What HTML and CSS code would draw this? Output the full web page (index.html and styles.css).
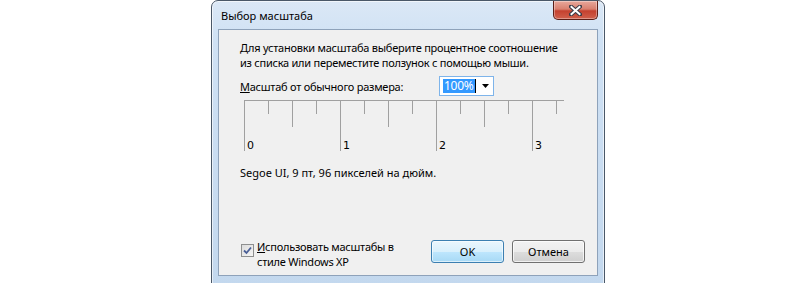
FILE: index.html
```html
<!DOCTYPE html>
<html lang="ru">
<head>
<meta charset="utf-8"/>
<title>Выбор масштаба</title>
<link rel="stylesheet" href="styles.css">
</head>
<body>
<div class="window">
  <div class="titlebar">
    <span class="title">Выбор масштаба</span>
    <div class="close">
      <svg width="13" height="11" viewBox="0 0 13 11">
        <path d="M2 1.5 L11 9.5 M11 1.5 L2 9.5" stroke="#3b3b47" stroke-width="4" stroke-linecap="square"/>
        <path d="M2.5 2 L10.5 9 M10.5 2 L2.5 9" stroke="#ffffff" stroke-width="2" stroke-linecap="square"/>
      </svg>
    </div>
  </div>
  <div class="client">
    <p class="intro">Для установки масштаба выберите процентное соотношение<br>из списка или переместите ползунок с помощью мыши.</p>
    <div class="scale-row">
      <label class="scale-label"><u>М</u>асштаб от обычного размера:</label>
      <div class="combo">
        <span class="combo-value">100%</span><span class="caret"></span>
        <svg class="combo-arrow" width="7" height="4" viewBox="0 0 7 4"><path d="M0 0 H7 L3.5 4 Z" fill="#000"/></svg>
      </div>
    </div>
    <svg class="ruler" width="322" height="51" viewBox="0 0 322 51">
      <g stroke="#a0a0a0" stroke-width="1">
        <line x1="0" y1="0.5" x2="320" y2="0.5"/>
        <line x1="0.5" y1="0" x2="0.5" y2="51"/>
        <line x1="96.5" y1="0" x2="96.5" y2="51"/>
        <line x1="192.5" y1="0" x2="192.5" y2="51"/>
        <line x1="288.5" y1="0" x2="288.5" y2="51"/>
        <line x1="48.5" y1="0" x2="48.5" y2="27"/>
        <line x1="144.5" y1="0" x2="144.5" y2="27"/>
        <line x1="240.5" y1="0" x2="240.5" y2="27"/>
        <line x1="24.5" y1="0" x2="24.5" y2="14"/>
        <line x1="72.5" y1="0" x2="72.5" y2="14"/>
        <line x1="120.5" y1="0" x2="120.5" y2="14"/>
        <line x1="168.5" y1="0" x2="168.5" y2="14"/>
        <line x1="216.5" y1="0" x2="216.5" y2="14"/>
        <line x1="264.5" y1="0" x2="264.5" y2="14"/>
        <line x1="312.5" y1="0" x2="312.5" y2="14"/>
      </g>
      <g class="ruler-num">
        <text x="3" y="49">0</text>
        <text x="99" y="49">1</text>
        <text x="195" y="49">2</text>
        <text x="291" y="49">3</text>
      </g>
    </svg>
    <p class="font-info">Segoe UI, 9 пт, 96 пикселей на дюйм.</p>
    <div class="bottom">
      <label class="check">
        <span class="box">
          <svg width="9" height="9" viewBox="0 0 9 9"><path d="M1 4.5 L3.5 7 L8 1.5" fill="none" stroke="#4a5f97" stroke-width="1.8"/></svg>
        </span>
        <span class="check-text"><u>И</u>спользовать масштабы в<br>стиле Windows XP</span>
      </label>
      <div class="buttons">
        <button class="btn default">OK</button>
        <button class="btn">Отмена</button>
      </div>
    </div>
  </div>
</div>
</body>
</html>
```

FILE: styles.css
```css
body {
  margin: 0;
  background-color: #ffffff;
  font-family: 'Noto Sans', sans-serif;
  font-size: 11px;
  letter-spacing: -0.25px;
  color: #000;
  overflow: hidden;
}
.window {
  box-sizing: border-box;
  margin-left: 211px;
  width: 394px;
  height: 290px;
  padding: 0 6px 7px;
  border: 1px solid #4a5868;
  border-radius: 7px 7px 0 0;
  background: linear-gradient(to bottom, #dbe8f6 0, #cfe1f4 40px, #c3d8ee 100%);
  box-shadow: inset 0 0 0 1px rgba(255,255,255,0.6);
}
.titlebar {
  display: flex;
  justify-content: space-between;
  align-items: flex-start;
  height: 28px;
}
.title {
  margin: 7px 0 0 3px;
  line-height: 15px;
  letter-spacing: 0;
}
.close {
  display: flex;
  align-items: center;
  justify-content: center;
  width: 45px;
  height: 19px;
  box-sizing: border-box;
  border: 1px solid #5b1e17;
  border-top: none;
  border-radius: 0 0 5px 5px;
  background: linear-gradient(to bottom, #e8a89c 0, #d9806f 45%, #c4412f 55%, #d0604c 100%);
  box-shadow: inset 0 0 0 1px rgba(255,255,255,0.35);
}
.client {
  box-sizing: border-box;
  height: 247px;
  display: flex;
  flex-direction: column;
  padding: 0 12px 6px 21px;
  border: 1px solid #8ea2ba;
  background-color: #f0f0f0;
}
.intro {
  margin: 10px 0 0;
  line-height: 15px;
  white-space: nowrap;
}
.scale-row {
  display: flex;
  align-items: center;
  margin-top: 6px;
}
.scale-label {
  width: 199px;
  line-height: 15px;
}
.combo {
  box-sizing: border-box;
  display: flex;
  align-items: center;
  width: 55px;
  height: 20px;
  padding: 0 4px 0 3px;
  border: 1px solid #7eb4ea;
  background-color: #ffffff;
}
.combo-value {
  background-color: #3399ff;
  color: #ffffff;
  font-size: 12px;
  line-height: 14px;
  padding: 0 1px;
}
.caret {
  width: 1px;
  height: 14px;
  background-color: #000;
}
.combo-arrow {
  margin-left: auto;
}
.ruler {
  display: block;
  margin: 4px 0 0 4px;
}
.ruler-num {
  font-family: 'DejaVu Sans', sans-serif;
  font-size: 11px;
  letter-spacing: 0;
  fill: #000;
}
.font-info {
  margin: 14px 0 0;
  line-height: 15px;
  letter-spacing: 0;
}
.bottom {
  margin-top: auto;
  display: flex;
  justify-content: space-between;
  align-items: flex-start;
}
.check {
  display: flex;
  align-items: flex-start;
  line-height: 15px;
}
.box {
  box-sizing: border-box;
  display: flex;
  align-items: center;
  justify-content: center;
  width: 13px;
  height: 13px;
  margin: 5px 3px 0 1px;
  border: 1px solid #8e8f8f;
  background: linear-gradient(135deg, #dcdcdc, #f5f5f5);
}
.buttons {
  display: flex;
  gap: 8px;
  margin-top: 1px;
}
.btn {
  box-sizing: border-box;
  width: 73px;
  height: 23px;
  font-family: 'Noto Sans', sans-serif;
  font-size: 11px;
  color: #000;
  border: 1px solid #707070;
  border-radius: 3px;
  background: linear-gradient(to bottom, #f2f2f2 0, #ebebeb 50%, #dddddd 51%, #cfcfcf 100%);
  box-shadow: inset 0 0 0 1px rgba(255,255,255,0.7);
}
.btn.default {
  border-color: #3c7fb1;
  background: linear-gradient(to bottom, #eaf6fd 0, #d9f0fc 50%, #bee6fd 51%, #a7d9f5 100%);
  box-shadow: inset 0 0 0 1px rgba(255,255,255,0.6);
}
```
